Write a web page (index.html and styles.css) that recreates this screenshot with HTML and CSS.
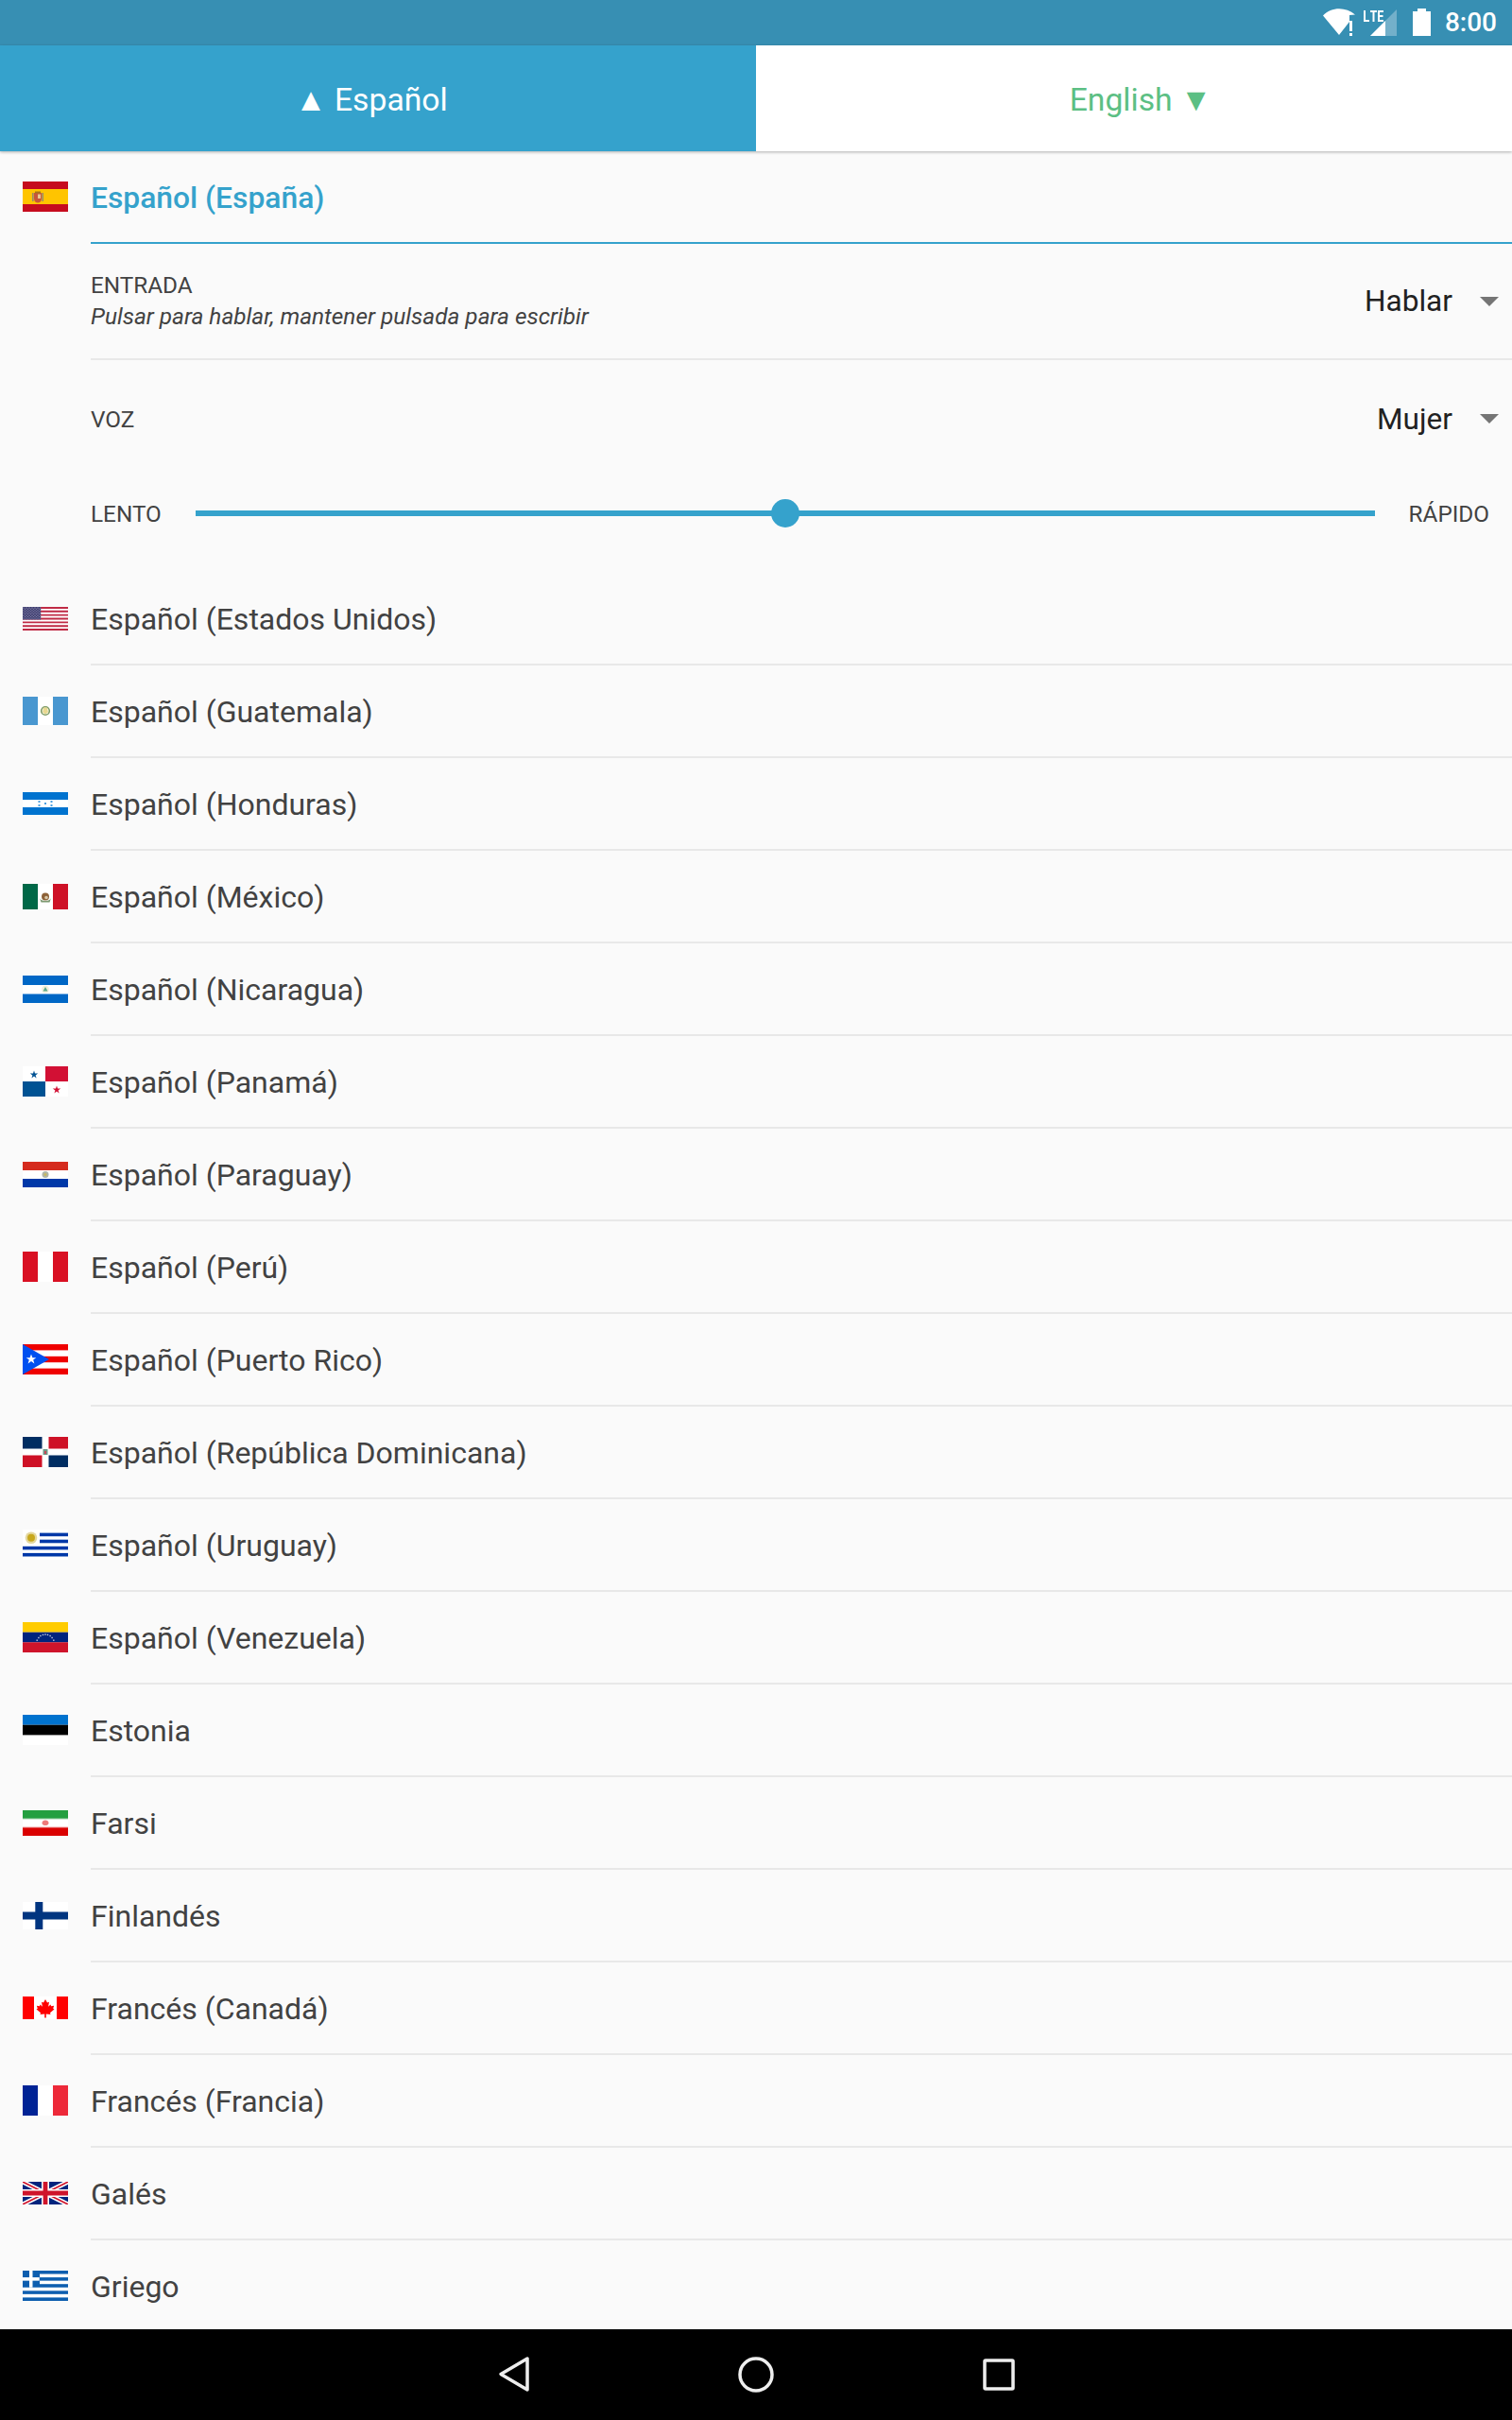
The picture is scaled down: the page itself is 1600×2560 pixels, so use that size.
FILE: index.html
```html
<!DOCTYPE html>
<html lang="es">
<head>
<meta charset="utf-8">
<title>Traductor</title>
<link rel="stylesheet" href="styles.css">
</head>
<body>
<div class="app">
  <header class="status-bar">
    <svg class="status-icons" width="116" height="48" viewBox="0 0 116 48">
      <path d="M1 16.500 C10 7 25 7 35 15.500 L29 16 L29 23 L18 37 Z" fill="#fff"/>
      <rect x="29" y="22" width="3" height="11" fill="#fff"/><rect x="29" y="35" width="3" height="3" fill="#fff"/>
      <path d="M51 38 L79 10 L79 38 Z" fill="#fff" fill-opacity=".3"/>
      <path d="M51 38 L67 22 L67 38 Z" fill="#fff"/>
      <path d="M44 11h2v10h4v2h-6z M51 11h7v2h-2.500v10h-2V13H51z M59 11h6v2h-4v3h3.500v2H61v3h4v2h-6z" fill="#fff"/>
      <path d="M96 12h5v-3h9v3h5v26H96z" fill="#fff"/>
    </svg>
    <span class="clock">8:00</span>
  </header>

  <nav class="tabs">
    <div class="tab tab-source">▲ Español</div>
    <div class="tab tab-target">English ▼</div>
  </nav>

  <main class="content">
    <div class="row row-selected">
      <div class="flag-cell">
        <svg class="flag" viewBox="0 0 48 32"><rect width="48" height="32" fill="#c60b1e"/><rect y="8" width="48" height="16" fill="#ffc400"/><rect x="10" y="12" width="1.600" height="9" fill="#9a8a6a"/><rect x="20.400" y="12" width="1.600" height="9" fill="#9a8a6a"/><path d="M12 12h8v6c0 3-2 4.500-4 4.500S12 21 12 18z" fill="#c8553a"/><rect x="13" y="10.500" width="6" height="2" fill="#a8741a"/><rect x="16" y="13.500" width="3" height="4.500" fill="#e8c890"/></svg>
      </div>
      <div class="row-label row-label-selected">Español (España)</div>
    </div>

    <section class="settings">
      <div class="setting setting-input">
        <div class="setting-text">
          <div class="setting-title">ENTRADA</div>
          <div class="setting-hint">Pulsar para hablar, mantener pulsada para escribir</div>
        </div>
        <div class="dropdown"><span>Hablar</span><i class="caret"></i></div>
      </div>
      <div class="setting setting-voice">
        <div class="setting-title">VOZ</div>
        <div class="dropdown"><span>Mujer</span><i class="caret"></i></div>
      </div>
      <div class="speed">
        <span class="setting-title">LENTO</span>
        <div class="track"><i class="thumb"></i></div>
        <span class="setting-title">RÁPIDO</span>
      </div>
    </section>

    <div class="row">
      <div class="flag-cell">
        <svg class="flag" viewBox="0 0 48 25"><defs><pattern id="us-stars" width="3" height="2.700" patternUnits="userSpaceOnUse"><rect width="3" height="2.700" fill="#3c3b6e"/><circle cx="1" cy="1" r=".6" fill="#c9c9de"/><circle cx="2.500" cy="2.300" r=".5" fill="#a9a9c9"/></pattern></defs><rect width="48" height="25" fill="#fff"/><path d="M0 0h48v1.900H0zM0 3.850h48v1.900H0zM0 7.700h48v1.900H0zM0 11.550h48v1.900H0zM0 15.400h48v1.900H0zM0 19.250h48v1.900H0zM0 23.100h48V25H0z" fill="#bf2a45"/><rect width="19.200" height="13.500" fill="url(#us-stars)"/></svg>
      </div>
      <div class="row-label">Español (Estados Unidos)</div>
    </div>

    <div class="row">
      <div class="flag-cell">
        <svg class="flag" viewBox="0 0 48 30"><rect width="48" height="30" fill="#4997d0"/><rect x="16" width="16" height="30" fill="#fff"/><circle cx="24" cy="15" r="4.300" fill="none" stroke="#7d9a62" stroke-width="1.600"/><path d="M22 11.500h4l1 5-3 2-3-2z" fill="#e8d890"/></svg>
      </div>
      <div class="row-label">Español (Guatemala)</div>
    </div>

    <div class="row">
      <div class="flag-cell">
        <svg class="flag" viewBox="0 0 48 24"><rect width="48" height="24" fill="#0073cf"/><rect y="8" width="48" height="8" fill="#fff"/><g fill="#4c9fe0"><rect x="23" y="11" width="2" height="2"/><rect x="16.500" y="9" width="2" height="2"/><rect x="16.500" y="13" width="2" height="2"/><rect x="29.500" y="9" width="2" height="2"/><rect x="29.500" y="13" width="2" height="2"/></g></svg>
      </div>
      <div class="row-label">Español (Honduras)</div>
    </div>

    <div class="row">
      <div class="flag-cell">
        <svg class="flag" viewBox="0 0 48 27"><rect width="16" height="27" fill="#006847"/><rect x="16" width="16" height="27" fill="#fff"/><rect x="32" width="16" height="27" fill="#ce1126"/><path d="M18 15c1 4 11 4 12 0l-1.500 4.500h-9z" fill="#7d9a72"/><circle cx="24" cy="13.500" r="4" fill="#8d6238"/><circle cx="25" cy="14.500" r="1.800" fill="#d8c8a8"/></svg>
      </div>
      <div class="row-label">Español (México)</div>
    </div>

    <div class="row">
      <div class="flag-cell">
        <svg class="flag" viewBox="0 0 48 29"><rect width="48" height="29" fill="#0067c6"/><rect y="10" width="48" height="9.500" fill="#fff"/><circle cx="24" cy="14.500" r="3.800" fill="#f1efd8"/><path d="M21.500 16.500L24 12l2.500 4.500z" fill="#5da98c"/></svg>
      </div>
      <div class="row-label">Español (Nicaragua)</div>
    </div>

    <div class="row">
      <div class="flag-cell">
        <svg class="flag" viewBox="0 0 48 32"><rect width="48" height="32" fill="#fff"/><rect x="24" width="24" height="16" fill="#d21034"/><rect y="16" width="24" height="16" fill="#005293"/><path d="M12 4.500l1 3h3.200l-2.600 1.900 1 3-2.600-1.900-2.600 1.900 1-3-2.600-1.900H11z" fill="#005293"/><path d="M36 20.500l1 3h3.200l-2.600 1.900 1 3-2.600-1.900-2.600 1.900 1-3-2.600-1.900H35z" fill="#d21034"/></svg>
      </div>
      <div class="row-label">Español (Panamá)</div>
    </div>

    <div class="row">
      <div class="flag-cell">
        <svg class="flag" viewBox="0 0 48 27"><rect width="48" height="9" fill="#d52b1e"/><rect y="9" width="48" height="9" fill="#fff"/><rect y="18" width="48" height="9" fill="#0038a8"/><circle cx="24" cy="13.500" r="3.500" fill="#b0b4a8"/><circle cx="24" cy="13.500" r="1.500" fill="#c8b860"/></svg>
      </div>
      <div class="row-label">Español (Paraguay)</div>
    </div>

    <div class="row">
      <div class="flag-cell">
        <svg class="flag" viewBox="0 0 48 32"><rect width="48" height="32" fill="#d91023"/><rect x="16" width="16" height="32" fill="#fff"/></svg>
      </div>
      <div class="row-label">Español (Perú)</div>
    </div>

    <div class="row">
      <div class="flag-cell">
        <svg class="flag" viewBox="0 0 48 32"><rect width="48" height="32" fill="#ef0000"/><rect y="6.400" width="48" height="6.400" fill="#fff"/><rect y="19.200" width="48" height="6.400" fill="#fff"/><path d="M0 0L28 16 0 32z" fill="#0050f0"/><path d="M9 10.500l1.400 3.700h3.900l-3.100 2.400 1.200 3.800L9 18.100l-3.400 2.300 1.200-3.800-3.100-2.400h3.900z" fill="#fff"/></svg>
      </div>
      <div class="row-label">Español (Puerto Rico)</div>
    </div>

    <div class="row">
      <div class="flag-cell">
        <svg class="flag" viewBox="0 0 48 32"><rect width="48" height="32" fill="#fff"/><rect width="20.500" height="12.500" fill="#002d62"/><rect x="27.500" width="20.500" height="12.500" fill="#ce1126"/><rect y="19.500" width="20.500" height="12.500" fill="#ce1126"/><rect x="27.500" y="19.500" width="20.500" height="12.500" fill="#002d62"/><rect x="21.500" y="13" width="5" height="6" fill="#6f9a8a"/><rect x="23" y="15" width="2" height="3" fill="#c44a5a"/></svg>
      </div>
      <div class="row-label">Español (República Dominicana)</div>
    </div>

    <div class="row">
      <div class="flag-cell">
        <svg class="flag" viewBox="0 0 48 32"><rect width="48" height="32" fill="#fff"/><rect x="18" y="3.600" width="30" height="3.600" fill="#0038a8"/><rect x="18" y="10.700" width="30" height="3.600" fill="#0038a8"/><rect y="17.800" width="48" height="3.600" fill="#0038a8"/><rect y="24.900" width="48" height="3.600" fill="#0038a8"/><circle cx="9" cy="8.800" r="6.300" fill="#e4d8a0"/><circle cx="9" cy="8.800" r="4" fill="#c8a81e"/></svg>
      </div>
      <div class="row-label">Español (Uruguay)</div>
    </div>

    <div class="row">
      <div class="flag-cell">
        <svg class="flag" viewBox="0 0 48 32"><rect width="48" height="10.700" fill="#fc0"/><rect y="10.700" width="48" height="10.700" fill="#00247d"/><rect y="21.300" width="48" height="10.700" fill="#cf142b"/><g fill="#c8cce0"><rect x="14.500" y="18.500" width="1.400" height="1.400"/><rect x="16.200" y="15.800" width="1.400" height="1.400"/><rect x="18.200" y="13.800" width="1.400" height="1.400"/><rect x="20.800" y="12.700" width="1.400" height="1.400"/><rect x="23.300" y="12.300" width="1.400" height="1.400"/><rect x="25.800" y="12.700" width="1.400" height="1.400"/><rect x="28.400" y="13.800" width="1.400" height="1.400"/><rect x="30.400" y="15.800" width="1.400" height="1.400"/><rect x="32.100" y="18.500" width="1.400" height="1.400"/></g></svg>
      </div>
      <div class="row-label">Español (Venezuela)</div>
    </div>

    <div class="row">
      <div class="flag-cell">
        <svg class="flag" viewBox="0 0 48 32"><rect width="48" height="32" fill="#fff"/><rect width="48" height="10.700" fill="#0072ce"/><rect y="10.700" width="48" height="10.700" fill="#000"/></svg>
      </div>
      <div class="row-label">Estonia</div>
    </div>

    <div class="row">
      <div class="flag-cell">
        <svg class="flag" viewBox="0 0 48 27"><rect width="48" height="9" fill="#239f40"/><rect y="9" width="48" height="9" fill="#fff"/><rect y="18" width="48" height="9" fill="#da0000"/><path d="M0 8.500h48v1H0z" fill="#9fd4ab"/><path d="M0 17.500h48v1H0z" fill="#f0a0a0"/><path d="M24 10.500c-2 0-3.500 1.300-3.500 3 0 1.300 1.300 2.500 2.500 2.500h2c1.200 0 2.500-1.200 2.500-2.500 0-1.700-1.500-3-3.500-3z" fill="#ee7a7a"/></svg>
      </div>
      <div class="row-label">Farsi</div>
    </div>

    <div class="row">
      <div class="flag-cell">
        <svg class="flag" viewBox="0 0 48 29"><rect width="48" height="29" fill="#fff"/><rect x="13.300" width="8" height="29" fill="#003580"/><rect y="10.500" width="48" height="8" fill="#003580"/></svg>
      </div>
      <div class="row-label">Finlandés</div>
    </div>

    <div class="row">
      <div class="flag-cell">
        <svg class="flag" viewBox="0 0 48 24"><rect width="48" height="24" fill="#fff"/><rect width="12" height="24" fill="#f00"/><rect x="36" width="12" height="24" fill="#f00"/><path d="M24 3l2 3.500 2-.8-.9 5 2.400-2.200.6 1.700 3-.5-.9 3.100 1.300.7-4.500 3.800.5 1.800-4.700-.6v4h-1.600v-4l-4.700.6.500-1.800-4.500-3.800 1.300-.7-.9-3.100 3 .5.600-1.700 2.400 2.200-.9-5 2 .8z" fill="#f00"/></svg>
      </div>
      <div class="row-label">Francés (Canadá)</div>
    </div>

    <div class="row">
      <div class="flag-cell">
        <svg class="flag" viewBox="0 0 48 32"><rect width="16" height="32" fill="#002395"/><rect x="16" width="16" height="32" fill="#fff"/><rect x="32" width="16" height="32" fill="#ed2939"/></svg>
      </div>
      <div class="row-label">Francés (Francia)</div>
    </div>

    <div class="row">
      <div class="flag-cell">
        <svg class="flag" viewBox="0 0 60 30"><rect width="60" height="30" fill="#00247d"/><path d="M0 0L60 30M60 0L0 30" stroke="#fff" stroke-width="6"/><path d="M0 0L60 30M60 0L0 30" stroke="#cf142b" stroke-width="2"/><path d="M30 0v30M0 15h60" stroke="#fff" stroke-width="10"/><path d="M30 0v30M0 15h60" stroke="#cf142b" stroke-width="6"/></svg>
      </div>
      <div class="row-label">Galés</div>
    </div>

    <div class="row">
      <div class="flag-cell">
        <svg class="flag" viewBox="0 0 48 32"><rect width="48" height="32" fill="#0d5eaf"/><g fill="#fff"><rect x="18" y="3.550" width="30" height="3.550"/><rect x="18" y="10.650" width="30" height="3.550"/><rect y="17.750" width="48" height="3.550"/><rect y="24.850" width="48" height="3.550"/><rect x="7" width="3.500" height="17.750"/><rect y="7.100" width="17.750" height="3.550"/></g></svg>
      </div>
      <div class="row-label">Griego</div>
    </div>
  </main>

  <footer class="nav-bar">
    <svg class="nav-icons" width="560" height="96" viewBox="0 0 560 96">
      <path d="M10 47.500L38 31V64Z" fill="none" stroke="#eee" stroke-width="3.500" stroke-linejoin="round"/>
      <circle cx="280" cy="48" r="17" fill="none" stroke="#eee" stroke-width="3.500"/>
      <rect x="522" y="33" width="30" height="30" rx="1" fill="none" stroke="#eee" stroke-width="3.500"/>
    </svg>
  </footer>
</div>
</body>
</html>
```
FILE: styles.css
```css
* { box-sizing: border-box; }
html, body { margin: 0; padding: 0; }
body { background: #fafafa; font-family: Roboto, "Noto Sans", sans-serif; }

.app { width: 1600px; height: 2560px; display: flex; flex-direction: column; overflow: hidden; background: #fafafa; }

.status-bar { height: 48px; flex: none; background: #378fb3; color: #fff; display: flex; align-items: center; justify-content: flex-end; padding-right: 16px; }
.status-icons { display: block; margin-right: 14px; }
.clock { font-size: 28px; font-weight: 500; line-height: 48px; }

.tabs { height: 112px; flex: none; display: flex; position: relative; z-index: 1; box-shadow: 0 1px 3px rgba(0,0,0,.3); }
.tab { flex: 1; display: flex; align-items: center; justify-content: center; font-size: 33.7px; padding-top: 2px; }
.tab-source { background: #35a2cc; color: #fff; padding-right: 14px; }
.tab-target { background: #fff; color: #5cbf84; padding-left: 14px; }

.content { flex: 1; min-height: 0; overflow: hidden; }

.row { display: flex; align-items: flex-start; padding-left: 24px; height: 98px; }
.flag-cell { width: 48px; height: 96px; flex: none; display: flex; align-items: center; }
.flag { width: 48px; display: block; }
.row-label { flex: 1; margin-left: 24px; height: 98px; line-height: 98px; border-bottom: 2px solid #e8e8e8; font-size: 32px; color: #424242; }
.row-label-selected { color: #35a2cc; font-weight: 500; font-size: 31.8px; border-bottom-color: #35a2cc; }

.settings { padding-left: 96px; height: 348px; display: flex; flex-direction: column; }
.setting { display: flex; align-items: center; justify-content: space-between; }
.setting-input { height: 123px; border-bottom: 2px solid #e8e8e8; }
.setting-text { padding-bottom: 2px; }
.setting-voice { height: 124px; }
.setting-title { font-size: 24.3px; line-height: 33px; color: #424242; }
.setting-hint { font-size: 24.4px; line-height: 33px; font-style: italic; color: #424242; }
.dropdown { display: flex; align-items: center; font-size: 31.6px; color: #212121; }
.caret { width: 0; height: 0; margin: 0 14px 0 29px; border-left: 10px solid transparent; border-right: 10px solid transparent; border-top: 10px solid #757575; }

.speed { height: 76px; display: flex; align-items: center; padding-right: 24px; }
.track { flex: 1; height: 6px; margin: 0 36px; background: #35a2cc; position: relative; }
.thumb { position: absolute; left: 50%; top: 50%; width: 30px; height: 30px; margin: -15px 0 0 -15px; border-radius: 50%; background: #35a2cc; }

.nav-bar { height: 96px; flex: none; background: #000; display: flex; justify-content: center; }
.nav-icons { display: block; }
```
